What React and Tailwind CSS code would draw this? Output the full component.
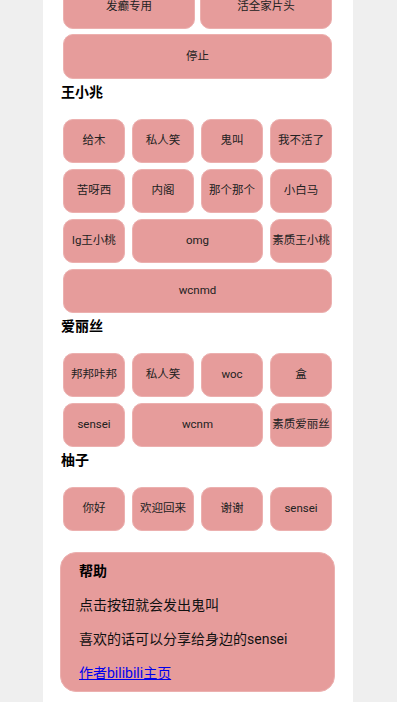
import React from "react";

const font = { fontFamily: '"Roboto", "Noto Sans CJK SC", sans-serif' };

function Btn({ children, className = "" }) {
  return (
    <button
      className={
        "h-[44px] rounded-[10px] bg-[#e69c9b] border border-[#ecb0af] text-[11.5px] leading-none text-[#222] whitespace-nowrap flex items-center justify-center p-0 " +
        className
      }
    >
      {children}
    </button>
  );
}

function Heading({ children }) {
  return (
    <div className="mt-[3px] mb-[17px] ml-[-2px] text-[14px] leading-[20px] font-bold text-black">
      {children}
    </div>
  );
}

function Grid4({ children }) {
  return (
    <div className="grid grid-cols-[62px_62px_62px_62px] gap-x-[7px] gap-y-[6px]">
      {children}
    </div>
  );
}

export default function App() {
  return (
    <div className="min-h-[702px] h-[702px] overflow-hidden bg-[#efefef] flex" style={font}>
      <div className="ml-[43px] w-[310px] bg-white flex flex-col items-start">
        <div className="ml-[20px] w-[269px] flex flex-col">
          <div className="mt-[-15px] grid grid-cols-[132px_132px] gap-x-[5px]">
            <Btn>发癫专用</Btn>
            <Btn>活全家片头</Btn>
          </div>
          <Btn className="mt-[5px] h-[45px] w-full">停止</Btn>

          <Heading>王小兆</Heading>
          <Grid4>
            <Btn>给木</Btn>
            <Btn>私人笑</Btn>
            <Btn>鬼叫</Btn>
            <Btn>我不活了</Btn>
            <Btn>苦呀西</Btn>
            <Btn>内阁</Btn>
            <Btn>那个那个</Btn>
            <Btn>小白马</Btn>
            <Btn>lg王小桃</Btn>
            <Btn className="col-span-2">omg</Btn>
            <Btn>素质王小桃</Btn>
            <Btn className="col-span-4">wcnmd</Btn>
          </Grid4>

          <Heading>爱丽丝</Heading>
          <Grid4>
            <Btn>邦邦咔邦</Btn>
            <Btn>私人笑</Btn>
            <Btn>woc</Btn>
            <Btn>盒</Btn>
            <Btn>sensei</Btn>
            <Btn className="col-span-2">wcnm</Btn>
            <Btn>素质爱丽丝</Btn>
          </Grid4>

          <Heading>柚子</Heading>
          <Grid4>
            <Btn>你好</Btn>
            <Btn>欢迎回来</Btn>
            <Btn>谢谢</Btn>
            <Btn>sensei</Btn>
          </Grid4>
        </div>

        <div className="ml-[17px] mt-[21px] w-[275px] rounded-[16px] bg-[#e69c9b] border border-[#ecb0af] px-[18px] py-[8px] flex flex-col gap-[14px] text-[14px] leading-[20px] text-[#111]">
          <div className="font-bold text-black">帮助</div>
          <div>点击按钮就会发出鬼叫</div>
          <div>喜欢的话可以分享给身边的sensei</div>
          <a href="#" className="text-[#0000ee] underline">作者bilibili主页</a>
        </div>
      </div>
    </div>
  );
}
